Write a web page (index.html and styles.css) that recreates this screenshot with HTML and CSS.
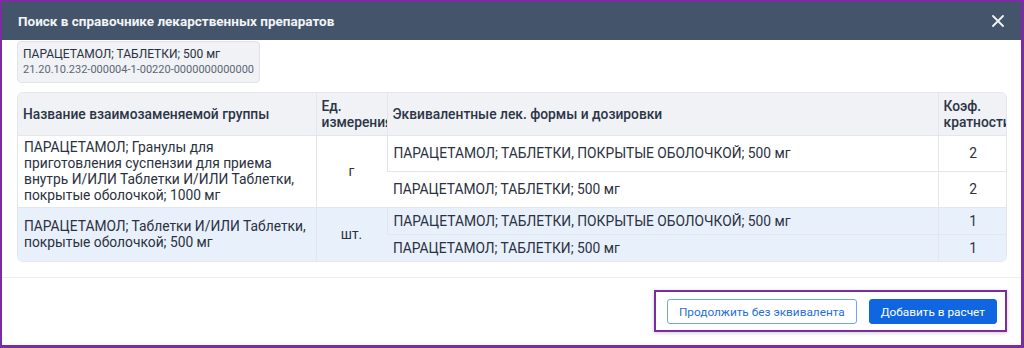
FILE: index.html
```html
<!DOCTYPE html>
<html lang="ru">
<head>
  <meta charset="UTF-8">
  <title>Поиск в справочнике лекарственных препаратов</title>
  <link rel="stylesheet" href="styles.css">
</head>
<body>

<div class="frame">
  <div class="modal">
    <div class="modal-header">
      <span class="modal-title">Поиск в справочнике лекарственных препаратов</span>
      <button class="modal-close" aria-label="Закрыть">
        <svg width="12" height="12" viewBox="0 0 12 12">
          <path d="M1 1L11 11M11 1L1 11" stroke="#f2f4f7" stroke-width="1.8" stroke-linecap="round"/>
        </svg>
      </button>
    </div>

    <div class="modal-body">
      <div class="drug-chip">
        <div class="drug-name">ПАРАЦЕТАМОЛ; ТАБЛЕТКИ; 500 мг</div>
        <div class="drug-code">21.20.10.232-000004-1-00220-0000000000000</div>
      </div>

      <div class="table-wrap">
        <table class="eq-table">
          <colgroup>
            <col class="c-name">
            <col class="c-unit">
            <col class="c-form">
            <col class="c-coef">
          </colgroup>
          <thead>
            <tr>
              <th>Название взаимозаменяемой группы</th>
              <th>Ед. измерения</th>
              <th>Эквивалентные лек. формы и дозировки</th>
              <th>Коэф. кратности</th>
            </tr>
          </thead>
          <tbody>
            <tr class="row-a">
              <td rowspan="2">ПАРАЦЕТАМОЛ; Гранулы для приготовления суспензии для приема внутрь И/ИЛИ Таблетки И/ИЛИ Таблетки, покрытые оболочкой; 1000 мг</td>
              <td rowspan="2" class="center">г</td>
              <td>ПАРАЦЕТАМОЛ; ТАБЛЕТКИ, ПОКРЫТЫЕ ОБОЛОЧКОЙ; 500 мг</td>
              <td class="center">2</td>
            </tr>
            <tr class="row-a">
              <td>ПАРАЦЕТАМОЛ; ТАБЛЕТКИ; 500 мг</td>
              <td class="center">2</td>
            </tr>
            <tr class="row-b selected">
              <td rowspan="2">ПАРАЦЕТАМОЛ; Таблетки И/ИЛИ Таблетки, покрытые оболочкой; 500 мг</td>
              <td rowspan="2" class="center">шт.</td>
              <td>ПАРАЦЕТАМОЛ; ТАБЛЕТКИ, ПОКРЫТЫЕ ОБОЛОЧКОЙ; 500 мг</td>
              <td class="center">1</td>
            </tr>
            <tr class="row-b selected">
              <td>ПАРАЦЕТАМОЛ; ТАБЛЕТКИ; 500 мг</td>
              <td class="center">1</td>
            </tr>
          </tbody>
        </table>
      </div>
    </div>

    <div class="modal-footer">
      <div class="actions">
        <button class="btn btn-outline">Продолжить без эквивалента</button>
        <button class="btn btn-primary">Добавить в расчет</button>
      </div>
    </div>
  </div>
</div>

</body>
</html>
```

FILE: styles.css
```css
html, body {
  margin: 0;
  padding: 0;
  height: 100%;
}

body {
  font-family: Roboto, "Noto Sans", Arial, sans-serif;
  color: #2a3140;
  background: #fff;
}

.frame {
  box-sizing: border-box;
  width: 1024px;
  height: 348px;
  border: solid #7b2ca1;
  border-width: 2px 3px 3px 2px;
  overflow: hidden;
}

.modal {
  display: flex;
  flex-direction: column;
  height: 100%;
  background: #fff;
}

.modal-header {
  display: flex;
  align-items: center;
  justify-content: space-between;
  height: 38px;
  padding: 0 16px 0 16px;
  background: #44546b;
  flex-shrink: 0;
}

.modal-title {
  color: #f2f4f7;
  font-size: 13.5px;
  font-weight: bold;
}

.modal-close {
  display: flex;
  align-items: center;
  justify-content: center;
  width: 20px;
  height: 20px;
  padding: 0;
  margin-right: -3px;
  background: none;
  border: none;
  cursor: pointer;
}

.modal-body {
  padding: 1px 14px 15px 15px;
  border-bottom: 1px solid #eceef1;
}

.drug-chip {
  width: fit-content;
  padding: 4px 5px 4px 5px;
  background: #f0f2f5;
  border: 1px solid #e1e4e9;
  border-radius: 4px;
  line-height: 16px;
}

.drug-name {
  color: #2a3140;
  font-size: 12px;
}

.drug-code {
  color: #5c6676;
  font-size: 11px;
}

.table-wrap {
  margin-top: 9px;
  border: 1px solid #e3e6eb;
  border-radius: 6px;
  overflow: hidden;
}

.eq-table {
  width: 100%;
  table-layout: fixed;
  border-collapse: collapse;
  font-size: 13.8px;
  line-height: 16px;
}

.c-name { width: 298px; }
.c-unit { width: 71px; }
.c-form { width: 551px; }
.c-coef { width: 70px; }

.eq-table th {
  box-sizing: border-box;
  height: 42px;
  padding: 4px 5px;
  background: #f0f2f5;
  font-weight: 500;
  text-align: left;
  color: #2b3547;
  overflow: hidden;
  border-left: 1px solid #e3e6eb;
  border-bottom: 1px solid #e3e6eb;
}

.eq-table td {
  padding: 2px 6px;
  border-left: 1px solid #e3e6eb;
  border-top: 1px solid #e3e6eb;
  overflow: hidden;
}

.eq-table th:first-child,
.eq-table td:first-child {
  border-left: none;
}

.eq-table thead + tbody tr:first-child td {
  border-top: none;
}

.eq-table tr.row-a {
  height: 36px;
}

.eq-table tr.row-b {
  height: 27px;
}

.eq-table tr.selected td {
  background: #e8f0fc;
}

.eq-table .center {
  text-align: center;
}

.modal-footer {
  display: flex;
  justify-content: flex-end;
  padding: 12px 14px 0 0;
}

.actions {
  display: flex;
  gap: 12px;
  padding: 7px 8px 6px 11px;
  border: 2px solid #7b2ca1;
  box-shadow: 0 1px 4px rgba(0,0,0,0.2);
}

.btn {
  height: 25px;
  padding: 0 11px;
  font-family: Roboto, "Noto Sans", Arial, sans-serif;
  font-size: 11.8px;
  border-radius: 3px;
  cursor: pointer;
}

.btn-outline {
  background: #fff;
  color: #1f6fdc;
  border: 1px solid #6fa6ef;
}

.btn-primary {
  background: #0f66e0;
  color: #fff;
  border: 1px solid #0f66e0;
}
```
